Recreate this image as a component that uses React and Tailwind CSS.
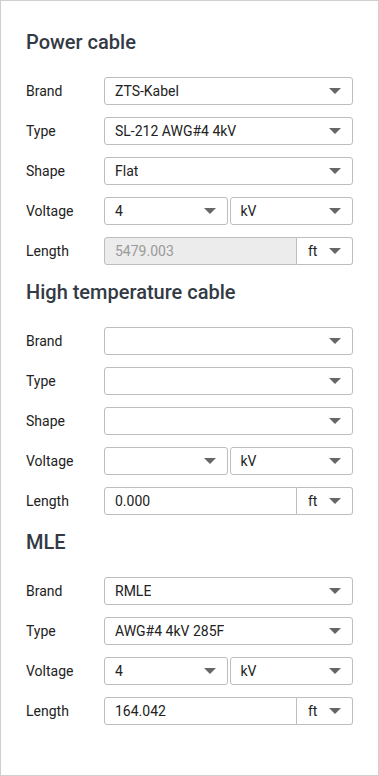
const Arrow = () => (
  <svg width="12" height="6" viewBox="0 0 12 6" aria-hidden="true" className="shrink-0">
    <path d="M0 0h12L6 6z" fill="#666" />
  </svg>
);

function Select({ value, className = '' }) {
  return (
    <div className={`flex h-7 items-center justify-between rounded-[3px] border border-[#bdbdbd] bg-white pl-[10px] pr-[11px] ${className}`}>
      <span className="truncate">{value}</span>
      <Arrow />
    </div>
  );
}

function Row({ label, children }) {
  return (
    <div className="flex items-center">
      <span className="w-[78px] shrink-0">{label}</span>
      <div className="flex flex-1 gap-[2px]">{children}</div>
    </div>
  );
}

function Length({ value, disabled }) {
  return (
    <div className="flex h-7 flex-1">
      <div
        className={`flex flex-1 items-center rounded-l-[3px] border border-[#bdbdbd] pl-[10px] ${
          disabled ? 'bg-[#ececec] text-[#9a9a9a]' : 'bg-white'
        }`}
      >
        {value}
      </div>
      <div className="flex w-[56px] items-center justify-between rounded-r-[3px] border border-l-0 border-[#bdbdbd] bg-white pl-[11px] pr-[11px]">
        <span>ft</span>
        <Arrow />
      </div>
    </div>
  );
}

function Section({ title, children }) {
  return (
    <section>
      <h2 className="text-[20px] leading-6 font-medium text-[#333a44]">{title}</h2>
      <div className="mt-[23px] flex flex-col gap-3">{children}</div>
    </section>
  );
}

export default function App() {
  return (
    <div
      className="h-[776px] w-[379px] border border-[#cfcfcf] bg-white pt-[29px] pl-[25px] pr-[25px] text-[14px] text-[#222]"
      style={{ fontFamily: 'Roboto, "Liberation Sans", sans-serif' }}
    >
      <div className="flex flex-col gap-[15px]">
        <Section title="Power cable">
          <Row label="Brand"><Select value="ZTS-Kabel" className="flex-1" /></Row>
          <Row label="Type"><Select value="SL-212 AWG#4 4kV" className="flex-1" /></Row>
          <Row label="Shape"><Select value="Flat" className="flex-1" /></Row>
          <Row label="Voltage">
            <Select value="4" className="flex-1" />
            <Select value="kV" className="flex-1" />
          </Row>
          <Row label="Length"><Length value="5479.003" disabled /></Row>
        </Section>
        <Section title="High temperature cable">
          <Row label="Brand"><Select value="" className="flex-1" /></Row>
          <Row label="Type"><Select value="" className="flex-1" /></Row>
          <Row label="Shape"><Select value="" className="flex-1" /></Row>
          <Row label="Voltage">
            <Select value="" className="flex-1" />
            <Select value="kV" className="flex-1" />
          </Row>
          <Row label="Length"><Length value="0.000" /></Row>
        </Section>
        <Section title="MLE">
          <Row label="Brand"><Select value="RMLE" className="flex-1" /></Row>
          <Row label="Type"><Select value="AWG#4 4kV 285F" className="flex-1" /></Row>
          <Row label="Voltage">
            <Select value="4" className="flex-1" />
            <Select value="kV" className="flex-1" />
          </Row>
          <Row label="Length"><Length value="164.042" /></Row>
        </Section>
      </div>
    </div>
  );
}
